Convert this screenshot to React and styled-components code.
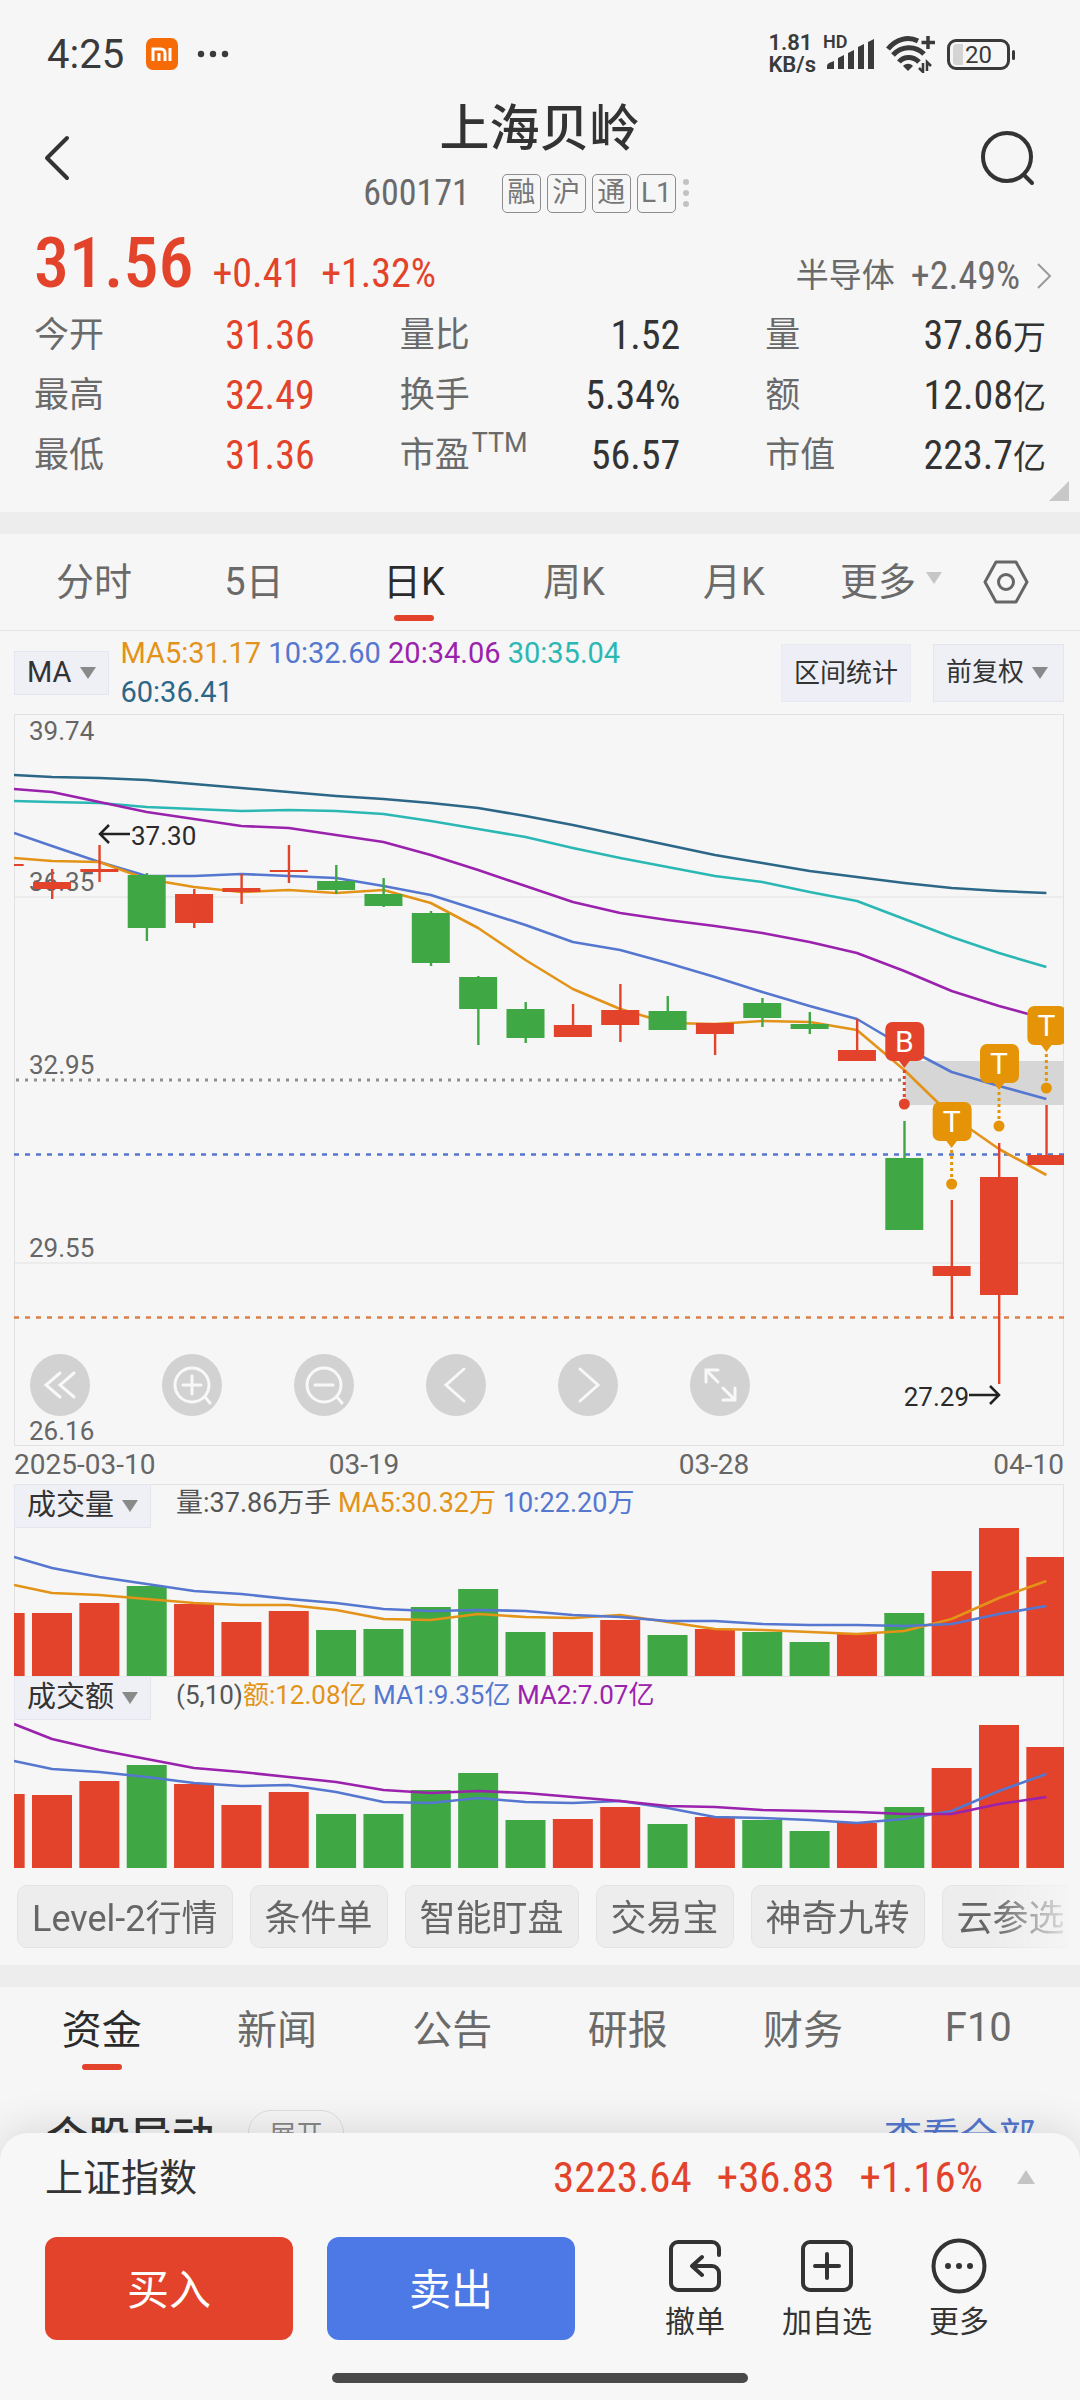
import React, { useState } from "react";
import styled, { createGlobalStyle } from "styled-components";

const RED = "#e2432a";
const GREEN = "#3fa845";
const ORANGE = "#e39317";
const BLUE = "#5577cf";
const PURPLE = "#9a22ad";
const CYAN = "#2bb8b5";
const NAVY = "#2c6788";

const STEP = 47.35;
const FIRST = 38;
const xOf = (i) => FIRST + STEP * i;

// top, bottom, high, low, rising
const candles = [
  [150, 152, 150, 152, 1],
  [168, 175, 155, 185, 1],
  [155, 158, 131, 168, 1],
  [161, 214, 159, 227, 0],
  [180, 209, 175, 214, 1],
  [174, 178, 160, 190, 1],
  [156, 158, 131, 169, 1],
  [167, 176, 151, 180, 0],
  [180, 192, 164, 193, 0],
  [199, 249, 197, 252, 0],
  [263, 295, 262, 331, 0],
  [295, 324, 288, 329, 0],
  [311, 323, 290, 323, 1],
  [296, 311, 270, 328, 1],
  [297, 316, 282, 316, 0],
  [309, 320, 309, 341, 1],
  [289, 304, 284, 313, 0],
  [310, 315, 298, 320, 0],
  [336, 347, 305, 347, 1],
  [444, 516, 407, 516, 0],
  [552, 562, 486, 605, 1],
  [463, 581, 429, 670, 1],
  [441, 451, 391, 451, 1],
];

// the first value of each line sits on the left edge of the plot
const priceLines = [
  { color: NAVY, points: [61, 63, 64, 66, 70, 74, 78, 82, 85, 89, 94, 102, 111, 121, 131, 141, 149, 157, 163, 169, 174, 177, 179] },
  { color: CYAN, points: [87, 88, 89, 93, 95, 97, 96, 97, 100, 107, 115, 123, 134, 144, 153, 162, 168, 178, 187, 205, 223, 239, 253] },
  { color: PURPLE, points: [75, 78, 88, 98, 105, 112, 114, 121, 128, 141, 156, 172, 188, 199, 206, 212, 219, 228, 239, 257, 277, 292, 305] },
  { color: BLUE, points: [119, 132, 148, 162, 162, 160, 162, 164, 172, 181, 196, 211, 228, 236, 249, 263, 278, 292, 305, 333, 358, 372, 385] },
  { color: ORANGE, points: [144, 147, 148, 165, 173, 178, 176, 179, 176, 189, 214, 246, 275, 295, 309, 310, 307, 308, 316, 356, 402, 435, 461] },
];

const volume = {
  bars: [129, 129, 119, 102, 120, 138, 127, 146, 145, 123, 105, 148, 148, 136, 151, 145, 148, 158, 150, 129, 87, 44, 73],
  lines: [
    { color: ORANGE, points: [101, 109, 111, 115, 119, 121, 121, 126, 135, 136, 130, 133, 134, 131, 138, 145, 146, 148, 150, 147, 135, 114, 97] },
    { color: BLUE, points: [73, 84, 93, 100, 107, 110, 115, 119, 125, 127, 126, 127, 131, 133, 137, 137, 140, 141, 141, 142, 140, 130, 122] },
  ],
};

const amount = {
  bars: [118, 119, 105, 89, 108, 129, 116, 138, 138, 114, 97, 144, 143, 131, 148, 141, 144, 155, 147, 131, 92, 49, 71],
  lines: [
    { color: BLUE, points: [85, 93, 96, 101, 107, 110, 109, 116, 126, 127, 122, 126, 127, 125, 132, 141, 142, 144, 147, 143, 135, 115, 98] },
    { color: PURPLE, points: [48, 63, 74, 83, 92, 96, 101, 106, 114, 117, 115, 117, 121, 125, 130, 131, 134, 135, 136, 138, 138, 128, 121] },
  ],
};

const marks = [
  { at: 18, y: 308, letter: "B", color: RED },
  { at: 19, y: 388, letter: "T", color: "#e59408" },
  { at: 20, y: 330, letter: "T", color: "#e59408" },
  { at: 21, y: 292, letter: "T", color: "#e59408" },
];

const stats = [
  { name: "今开", value: "31.36", rise: true },
  { name: "量比", value: "1.52" },
  { name: "量", value: "37.86", unit: "万" },
  { name: "最高", value: "32.49", rise: true },
  { name: "换手", value: "5.34%" },
  { name: "额", value: "12.08", unit: "亿" },
  { name: "最低", value: "31.36", rise: true },
  { name: "市盈", value: "56.57", sup: "TTM" },
  { name: "市值", value: "223.7", unit: "亿" },
];

const periods = ["分时", "5日", "日K", "周K", "月K"];
const tools = ["Level-2行情", "条件单", "智能盯盘", "交易宝", "神奇九转", "云参选"];
const sections = ["资金", "新闻", "公告", "研报", "财务", "F10"];

function MaLine({ color, points }) {
  const path = points.map((y, i) => `${i === 0 ? 0 : xOf(i - 1)},${y}`).join(" ");
  return <polyline points={path} fill="none" stroke={color} strokeWidth="2.6" strokeLinejoin="round" />;
}

function Triangle({ size = 16, color = "#8a8a8a", up }) {
  return (
    <svg width={size} height={size - 4} viewBox="0 0 16 12" preserveAspectRatio="none" aria-hidden="true">
      <path d={up ? "M8 0 16 12H0Z" : "M0 0H16L8 12Z"} fill={color} />
    </svg>
  );
}

function Picker({ label, options, ...rest }) {
  return (
    <PickerBox {...rest}>
      <select aria-label={label}>
        {options.map((o) => (
          <option key={o}>{o}</option>
        ))}
      </select>
      <Triangle />
    </PickerBox>
  );
}

function TradeMark({ at, y, letter, color }) {
  const x = xOf(at);
  return (
    <g>
      <line x1={x} x2={x} y1={y + 48} y2={y + 78} stroke={color} strokeWidth="3" strokeDasharray="3 3" />
      <circle cx={x} cy={y + 82} r="5.5" fill={color} />
      <rect x={x - 19} y={y} width="39" height="39" rx="7" fill={color} />
      <path d={`M${x - 6} ${y + 38}h12l-6 8z`} fill={color} />
      <ChartText x={x} y={y + 30} $fill="#fff" $size={30} textAnchor="middle">
        {letter}
      </ChartText>
    </g>
  );
}

function PriceChart() {
  return (
    <Drawing viewBox="0 0 1050 732" role="img" aria-label="日K">
      <path d="M0 .5H1050M0 183H1050M0 549H1050M0 731.5H1050M.5 0V732M1049.5 0V732" stroke="#e2e2e2" strokeWidth="1" fill="none" />
      <line x1="2" x2="1050" y1="366" y2="366" stroke="#8f8f8f" strokeWidth="3" strokeDasharray="3 6" />
      <line x1="0" x2="1050" y1="440.5" y2="440.5" stroke={BLUE} strokeWidth="2.4" strokeDasharray="5 6" />
      <line x1="0" x2="1050" y1="603.5" y2="603.5" stroke="#dd8048" strokeWidth="2.4" strokeDasharray="5 6" />
      <rect x="891" y="347" width="159" height="44" fill="#d6d6d6" />
      {["39.74", "36.35", "32.95", "29.55", "26.16"].map((v, i) => (
        <ChartText key={v} x="15" y={[26, 177, 360, 543, 726][i]}>
          {v}
        </ChartText>
      ))}
      {priceLines.map((line) => (
        <MaLine key={line.color} {...line} />
      ))}
      {candles.map(([top, bottom, high, low, up], i) => {
        const x = xOf(i - 1);
        const color = up ? RED : GREEN;
        return (
          <g key={i} fill={color}>
            <rect x={x - 19} y={top} width="38" height={bottom - top} />
            <rect x={x - 1} y={high} width="2.4" height={low - high} />
          </g>
        );
      })}
      {marks.map((m) => (
        <TradeMark key={m.at} {...m} />
      ))}
      <path d="M116 120H86M95 111 86 120 95 129" fill="none" stroke="#222" strokeWidth="2.5" />
      <ChartText x="117" y="131" $fill="#2b2b2b">
        37.30
      </ChartText>
      <ChartText x="955" y="692" textAnchor="end" $fill="#2b2b2b">
        27.29
      </ChartText>
      <path d="M955 681H985M976 672 985 681 976 690" fill="none" stroke="#222" strokeWidth="2.5" />
    </Drawing>
  );
}

function BarChart({ bars, lines, label }) {
  return (
    <Drawing viewBox="0 0 1050 192" role="img" aria-label={label}>
      <path d="M0 .5H1050M.5 0V192M1049.5 0V192" stroke="#e2e2e2" fill="none" />
      {bars.map((top, i) => (
        <rect key={i} x={xOf(i - 1) - 20} y={top} width="40" height={192 - top} fill={candles[i][4] ? RED : GREEN} />
      ))}
      {lines.map((line) => (
        <MaLine key={line.color} {...line} />
      ))}
    </Drawing>
  );
}

function StatusBar() {
  return (
    <Status>
      <Clock>4:25</Clock>
      <svg width="32" height="32" viewBox="0 0 32 32" aria-hidden="true">
        <rect width="32" height="32" rx="7" fill="#f76b07" />
        <path d="M7 23V11h8a4 4 0 0 1 4 4v8M13 15v8M24 10v13" fill="none" stroke="#fff" strokeWidth="3" />
      </svg>
      <svg width="34" height="8" viewBox="0 0 34 8" fill="#3a3a3a" aria-hidden="true">
        <circle cx="5" cy="4" r="3.2" />
        <circle cx="17" cy="4" r="3.2" />
        <circle cx="29" cy="4" r="3.2" />
      </svg>
      <StatusRight>
        <Speed>
          <span>1.81</span>
          <span>KB/s</span>
        </Speed>
        <Signal>
          <small>HD</small>
          <svg width="48" height="32" viewBox="0 0 48 32" fill="#3a3a3a" aria-hidden="true">
            <path d="M0 31v-3q0-2 2-3l5-2v8zM11 31V20l6-3v14zM21 31V15l6-3v19zM31 31V9l6-3v25zM41 31V4l6-3v30z" />
          </svg>
        </Signal>
        <svg width="50" height="38" viewBox="0 0 50 38" fill="none" stroke="#3a3a3a" strokeWidth="5" aria-hidden="true">
          <path d="M2 14C10 4 22 1 32 6" />
          <path d="M7 20c8-9 22-10 31-1" />
          <path d="M13 27c5-6 14-6 20 0" />
          <path d="M22 36l-5-5c3-3 7-3 10 0z" fill="#3a3a3a" stroke="none" />
          <path d="M42 1v13M35.500 7.500H49" strokeWidth="3.500" />
          <path d="M37 28v9l-4-4M41 36v-9l4 4" strokeWidth="2.500" />
        </svg>
        <Battery>
          <span>20</span>
        </Battery>
      </StatusRight>
    </Status>
  );
}

export default function App() {
  const [period, setPeriod] = useState("日K");
  const [section, setSection] = useState("资金");

  return (
    <Page>
      <GlobalStyle />
      <Content>
        <StatusBar />
        <Header>
          <IconButton aria-label="返回">
            <svg width="28" height="48" viewBox="0 0 28 48" fill="none" stroke="#333" strokeWidth="4" strokeLinecap="round" strokeLinejoin="round">
              <path d="M24 4 4 24 24 44" />
            </svg>
          </IconButton>
          <Heading>
            <h1>上海贝岭</h1>
            <CodeLine>
              <Code>600171</Code>
              {["融", "沪", "通", "L1"].map((t) => (
                <Badge key={t}>{t}</Badge>
              ))}
              <svg width="8" height="30" viewBox="0 0 8 30" fill="#c2c2c2" aria-hidden="true">
                <circle cx="4" cy="4" r="3" />
                <circle cx="4" cy="15" r="3" />
                <circle cx="4" cy="26" r="3" />
              </svg>
            </CodeLine>
          </Heading>
          <IconButton aria-label="搜索">
            <svg width="56" height="56" viewBox="0 0 56 56" fill="none" stroke="#333" strokeWidth="4" strokeLinecap="round">
              <circle cx="27" cy="27" r="24" />
              <path d="M44 45l8 8" />
            </svg>
          </IconButton>
        </Header>

        <Quote>
          <PriceLine>
            <Price>31.56</Price>
            <Change>+0.41</Change>
            <Change>+1.32%</Change>
            <Sector href="#sector">
              <span>半导体</span>
              <SectorChange>+2.49%</SectorChange>
              <svg width="16" height="26" viewBox="0 0 16 26" fill="none" stroke="#9a9a9a" strokeWidth="2">
                <path d="M2 1 14 13 2 25" />
              </svg>
            </Sector>
          </PriceLine>
          <StatGrid>
            {stats.map(({ name, value, unit, rise, sup }) => (
              <Stat key={name}>
                <dt>
                  {name}
                  {sup && <sup>{sup}</sup>}
                </dt>
                <StatValue $rise={rise}>
                  {value}
                  {unit && <small>{unit}</small>}
                </StatValue>
              </Stat>
            ))}
          </StatGrid>
          <Corner width="20" height="20" viewBox="0 0 20 20" aria-hidden="true">
            <path d="M20 0V20H0Z" fill="#c8c8c8" />
          </Corner>
        </Quote>
        <Divider />

        <PeriodTabs>
          {periods.map((p) => (
            <Tab key={p} $active={p === period} $size={38} onClick={() => setPeriod(p)}>
              {p}
            </Tab>
          ))}
          <MoreTab>
            更多
            <Triangle color="#c6c6c6" />
          </MoreTab>
          <SettingsButton aria-label="设置">
            <svg width="46" height="44" viewBox="0 0 46 44" fill="none" stroke="#666" strokeWidth="3" strokeLinejoin="round">
              <path d="M13 2H33L44 22 33 42H13L2 22Z" />
              <circle cx="23" cy="22" r="7.500" />
            </svg>
          </SettingsButton>
        </PeriodTabs>

        <Charts>
          <Indicator>
            <Picker label="指标" options={["MA", "BOLL", "EXPMA"]} />
            <Averages>
              <Tint $color={ORANGE}>MA5:31.17</Tint> <Tint $color={BLUE}>10:32.60</Tint>{" "}
              <Tint $color={PURPLE}>20:34.06</Tint> <Tint $color={CYAN}>30:35.04</Tint>{" "}
              <Tint $color={NAVY}>60:36.41</Tint>
            </Averages>
            <RangeButton>区间统计</RangeButton>
            <AdjustPicker label="复权" options={["前复权", "后复权", "不复权"]} />
          </Indicator>
          <Plot>
            <PriceChart />
            <Controls>
              <RoundButton aria-label="最早">
                <path d="M30 19 16 31 30 43M44 19 30 31 44 43" />
              </RoundButton>
              <RoundButton aria-label="放大">
                <circle cx="30" cy="31" r="17" />
                <path d="M21 31H39M30 22V40M43 43l5 6" />
              </RoundButton>
              <RoundButton aria-label="缩小">
                <circle cx="30" cy="31" r="17" />
                <path d="M21 31H39M43 43l5 6" />
              </RoundButton>
              <RoundButton aria-label="向左">
                <path d="M38 15 20 31 38 47" />
              </RoundButton>
              <RoundButton aria-label="向右">
                <path d="M22 15 40 31 22 47" />
              </RoundButton>
              <RoundButton aria-label="全屏">
                <path d="M16 28V16H28M16 16 28 28M45 34V46H33M45 46 33 34" />
              </RoundButton>
            </Controls>
          </Plot>
          <Dates>
            <time>2025-03-10</time>
            <time>03-19</time>
            <time>03-28</time>
            <time>04-10</time>
          </Dates>
          <Plot>
            <BarChart {...volume} label="成交量" />
            <BarHead>
              <Picker label="副图一" options={["成交量", "MACD"]} />
              <Legend $size={27}>
                量:37.86万手 <Tint $color={ORANGE}>MA5:30.32万</Tint> <Tint $color={BLUE}>10:22.20万</Tint>
              </Legend>
            </BarHead>
          </Plot>
          <Plot>
            <BarChart {...amount} label="成交额" />
            <BarHead>
              <Picker label="副图二" options={["成交额", "KDJ"]} />
              <Legend $size={26}>
                (5,10)<Tint $color={ORANGE}>额:12.08亿</Tint> <Tint $color={BLUE}>MA1:9.35亿</Tint>{" "}
                <Tint $color={PURPLE}>MA2:7.07亿</Tint>
              </Legend>
            </BarHead>
          </Plot>
        </Charts>

        <Tools>
          {tools.map((t) => (
            <Tool key={t}>{t}</Tool>
          ))}
        </Tools>
        <Divider />

        <SectionTabs>
          {sections.map((s) => (
            <Tab key={s} $active={s === section} $size={40} onClick={() => setSection(s)}>
              {s}
            </Tab>
          ))}
        </SectionTabs>
        <NewsHead>
          <h2>个股异动</h2>
          <button>展开</button>
          <a href="#all">查看全部</a>
        </NewsHead>
      </Content>

      <Sheet>
        <IndexRow>
          <IndexName>上证指数</IndexName>
          <IndexValues>
            <span>3223.64</span>
            <span>+36.83</span>
            <span>+1.16%</span>
          </IndexValues>
          <Triangle size={18} color="#c4c4c4" up />
        </IndexRow>
        <Actions>
          <TradeButton $color={RED}>买入</TradeButton>
          <TradeButton $color="#4c79e6">卖出</TradeButton>
          <Shortcuts>
            <Shortcut>
              <svg width="56" height="56" viewBox="0 0 56 56">
                <path d="M52 17V11a7 7 0 0 0-7-7H11a7 7 0 0 0-7 7V45a7 7 0 0 0 7 7H45a7 7 0 0 0 7-7V35a7 7 0 0 0-7-7H26M35 19 25 28 35 37" />
              </svg>
              撤单
            </Shortcut>
            <Shortcut>
              <svg width="56" height="56" viewBox="0 0 56 56">
                <rect x="4" y="4" width="48" height="48" rx="7" />
                <path d="M16 28H40M28 16V40" />
              </svg>
              加自选
            </Shortcut>
            <Shortcut>
              <svg width="56" height="56" viewBox="0 0 56 56">
                <circle cx="28" cy="28" r="25.500" />
                <path d="M17 28h.01M28 28h.01M39 28h.01" strokeWidth="6" />
              </svg>
              更多
            </Shortcut>
          </Shortcuts>
        </Actions>
        <HomeBar />
      </Sheet>
    </Page>
  );
}

const GlobalStyle = createGlobalStyle`
  * {
    box-sizing: border-box;
  }
  body {
    margin: 0;
    background: #f6f6f6;
    color: #333;
    font-family: Roboto, "Noto Sans CJK SC", sans-serif;
  }
  button, select {
    border: none;
    padding: 0;
    background: none;
    color: inherit;
    font: inherit;
    white-space: nowrap;
  }
  h1, h2, p, dl, dd {
    margin: 0;
    font-weight: 400;
  }
  a {
    text-decoration: none;
  }
  svg {
    flex: none;
  }
`;

const NARROW = `"Roboto Condensed", Roboto, "Noto Sans CJK SC", sans-serif`;

const Page = styled.main`
  display: flex;
  flex-direction: column;
  height: 100vh;
`;
const Content = styled.div`
  flex: 1;
  min-height: 0;
  overflow: hidden;
`;

const Status = styled.div`
  display: flex;
  align-items: center;
  height: 88px;
  padding: 20px 70px 0 47px;
  color: #3a3a3a;
`;
const Clock = styled.span`
  margin-right: 22px;
  font-size: 40px;
  & + svg {
    margin-right: 18px;
  }
`;
const StatusRight = styled.div`
  display: flex;
  align-items: center;
  gap: 11px;
  margin-left: auto;
`;
const Speed = styled.div`
  display: grid;
  font-size: 22px;
  font-weight: 600;
  line-height: 22px;
`;
const Signal = styled.div`
  position: relative;
  display: flex;
  small {
    position: absolute;
    top: -4px;
    left: -4px;
    font-size: 18px;
    font-weight: 600;
    line-height: 16px;
  }
`;
const Battery = styled.div`
  position: relative;
  width: 63px;
  height: 31px;
  border: 3px solid #3a3a3a;
  border-radius: 9px;
  background: linear-gradient(90deg, #d4d4d4 20%, transparent 20%) content-box;
  padding: 2px 3px;
  font-size: 24px;
  line-height: 22px;
  text-align: center;
  &::after {
    content: "";
    position: absolute;
    top: 8px;
    right: -8px;
    width: 3px;
    height: 10px;
    border-radius: 2px;
    background: #3a3a3a;
  }
`;

const Header = styled.header`
  display: grid;
  grid-template-columns: 1fr auto 1fr;
  align-items: center;
  height: 140px;
  padding: 0 44px 0 43px;
  button:last-child {
    justify-self: end;
  }
`;
const IconButton = styled.button`
  display: flex;
`;
const Heading = styled.div`
  display: grid;
  justify-items: center;
  gap: 16px;
  padding-bottom: 2px;
  h1 {
    font-size: 50px;
    font-weight: 500;
    line-height: 56px;
  }
`;
const CodeLine = styled.div`
  display: flex;
  align-items: center;
  gap: 6px;
  padding-right: 26px;
`;
const Code = styled.span`
  margin-right: 26px;
  color: #6a6a6a;
  font-family: ${NARROW};
  font-size: 36px;
  line-height: 40px;
`;
const Badge = styled.span`
  width: 39px;
  height: 39px;
  border: 1px solid #8c8c8c;
  border-radius: 5px;
  color: #777;
  font-size: 28px;
  line-height: 36px;
  text-align: center;
`;

const Quote = styled.section`
  position: relative;
  padding: 0 34px;
  height: 284px;
`;
const PriceLine = styled.div`
  display: flex;
  align-items: baseline;
  gap: 19px;
  height: 78px;
  color: ${RED};
  line-height: 70px;
`;
const Price = styled.strong`
  font-family: ${NARROW};
  font-size: 70px;
  font-weight: 500;
`;
const Change = styled.span`
  font-family: ${NARROW};
  font-size: 40px;
`;
const Sector = styled.a`
  display: flex;
  gap: 16px;
  align-items: center;
  margin: 0 -6px 0 auto;
  color: #6a6a6a;
  font-size: 33px;
`;
const SectorChange = styled.span`
  font-family: ${NARROW};
  font-size: 38px;
`;
const StatGrid = styled.dl`
  display: grid;
  grid-template-columns: repeat(3, 1fr);
  column-gap: 85px;
`;
const Stat = styled.div`
  display: flex;
  justify-content: space-between;
  height: 60px;
  line-height: 60px;
  font-size: 35px;
  dt {
    color: #6a6a6a;
  }
  sup {
    margin-left: 2px;
    font-size: 27px;
    line-height: 0;
    vertical-align: 15px;
  }
`;
const StatValue = styled.dd`
  color: ${(p) => (p.$rise ? RED : "#333")};
  font-family: ${NARROW};
  font-size: 40px;
  small {
    font-size: 33px;
  }
`;
const Corner = styled.svg`
  position: absolute;
  right: 11px;
  bottom: 11px;
`;
const Divider = styled.div`
  height: 22px;
  background: #ededed;
`;

const PeriodTabs = styled.nav`
  display: grid;
  grid-template-columns: repeat(5, 160fr) 154fr 112fr;
  align-items: end;
  height: 97px;
  padding-left: 14px;
  border-bottom: 1px solid #e3e3e3;
`;
const Tab = styled.button`
  position: relative;
  height: 92px;
  padding-bottom: 12px;
  color: ${(p) => (p.$active ? "#2b2b2b" : "#6a6a6a")};
  font-size: ${(p) => p.$size}px;
  &::after {
    content: "";
    display: ${(p) => (p.$active ? "block" : "none")};
    position: absolute;
    bottom: 9px;
    left: calc(50% - 20px);
    width: 40px;
    height: 6px;
    border-radius: 3px;
    background: ${RED};
  }
`;
const MoreTab = styled.button`
  display: flex;
  align-items: center;
  justify-content: center;
  gap: 10px;
  height: 92px;
  padding-bottom: 12px;
  color: #6a6a6a;
  font-size: 38px;
`;
const SettingsButton = styled(IconButton)`
  align-self: center;
  padding-left: 15px;
`;

const Charts = styled.section`
  padding: 0 16px 0 14px;
`;
const Indicator = styled.div`
  display: flex;
  align-items: center;
  height: 83px;
  gap: 12px;
`;
const PickerBox = styled.label`
  display: inline-flex;
  align-items: center;
  gap: 8px;
  height: 44px;
  padding: 0 12px;
  border: 1px solid #e4e5ee;
  background: #eff0f6;
  color: #333;
  font-size: 29px;
  select {
    appearance: none;
    field-sizing: content;
    padding-bottom: 2px;
  }
`;
const Averages = styled.p`
  flex: 1;
  padding-right: 90px;
  font-size: 29px;
  line-height: 39px;
`;
const Tint = styled.span`
  color: ${(p) => p.$color};
  white-space: nowrap;
`;
const RangeButton = styled.button`
  width: 130px;
  height: 58px;
  margin-right: 10px;
  padding-bottom: 4px;
  border: 1px solid #e9e9f4;
  background: #eeeef6;
  font-size: 26px;
`;
const AdjustPicker = styled(Picker)`
  width: 131px;
  height: 58px;
  font-size: 26px;
`;

const Plot = styled.div`
  position: relative;
`;
const Drawing = styled.svg`
  display: block;
  width: 100%;
  height: auto;
`;
const ChartText = styled.text`
  font-size: ${(p) => p.$size || 26}px;
  fill: ${(p) => p.$fill || "#666"};
`;
const Controls = styled.div`
  position: absolute;
  left: 16px;
  bottom: 30px;
  display: flex;
  gap: 72px;
`;
const RoundButton = ({ children, ...rest }) => (
  <Round {...rest}>
    <svg width="60" height="62" viewBox="0 0 60 62" fill="none" stroke="#f8f8f8" strokeWidth="3" strokeLinecap="round">
      {children}
    </svg>
  </Round>
);
const Round = styled.button`
  width: 60px;
  height: 62px;
  border-radius: 50%;
  background: #d2d2d2;
`;
const Dates = styled.div`
  display: grid;
  grid-template-columns: 1fr 2fr 2fr 1fr;
  height: 38px;
  color: #666;
  font-size: 28px;
  line-height: 38px;
  text-align: center;
  white-space: nowrap;
  time:first-child {
    text-align: left;
  }
  time:last-child {
    text-align: right;
  }
`;
const BarHead = styled.div`
  position: absolute;
  top: 0;
  left: 0;
  display: flex;
  gap: 25px;
`;
const Legend = styled.p`
  color: #555;
  font-size: ${(p) => p.$size}px;
  line-height: 38px;
`;

const Tools = styled.div`
  display: flex;
  gap: 17px;
  margin: 17px 12px 17px 0;
  padding-left: 17px;
  overflow: hidden;
  mask-image: linear-gradient(90deg, #000 93%, transparent 101%);
`;
const Tool = styled.button`
  flex: none;
  height: 63px;
  padding: 0 14px 4px;
  border: 1px solid #e3e3e3;
  border-radius: 10px;
  background: #ededed;
  color: #666;
  font-size: 36px;
`;

const SectionTabs = styled.nav`
  display: grid;
  grid-template-columns: repeat(6, 1fr);
  padding: 0 14px;
`;
const NewsHead = styled.div`
  display: flex;
  align-items: center;
  height: 60px;
  margin-top: 24px;
  padding: 0 44px 0 46px;
  h2 {
    margin-right: 34px;
    font-size: 42px;
    font-weight: 500;
  }
  button {
    height: 46px;
    padding: 0 20px;
    border: 1px solid #ddd;
    border-radius: 23px;
    color: #888;
    font-size: 27px;
  }
  a {
    margin-left: auto;
    color: ${BLUE};
    font-size: 38px;
  }
`;

const Sheet = styled.footer`
  position: relative;
  padding: 0 45px 17px;
  border-radius: 28px 28px 0 0;
  background: #f7f7f7;
  box-shadow: 0 -4px 40px rgba(0, 0, 0, 0.12);
`;
const IndexRow = styled.div`
  display: flex;
  align-items: center;
  height: 88px;
`;
const IndexName = styled.span`
  padding-bottom: 5px;
  font-size: 38px;
`;
const IndexValues = styled.span`
  display: flex;
  gap: 25px;
  margin: 0 34px 0 auto;
  color: ${RED};
  font-family: ${NARROW};
  font-size: 43px;
`;
const Actions = styled.div`
  display: flex;
  gap: 34px;
  padding: 16px 0 33px;
`;
const TradeButton = styled.button`
  flex: 247;
  height: 103px;
  padding-bottom: 4px;
  border-radius: 12px;
  background: ${(p) => p.$color};
  color: #fff;
  font-size: 42px;
`;
const Shortcuts = styled.div`
  display: grid;
  grid-template-columns: repeat(3, 132px);
  margin: 0 -24px 0 20px;
  padding-right: 34px;
`;
const Shortcut = styled.button`
  display: grid;
  justify-items: center;
  align-content: center;
  gap: 10px;
  font-size: 30px;
  line-height: 36px;
  svg {
    fill: none;
    stroke: #333;
    stroke-width: 4;
    stroke-linecap: round;
    stroke-linejoin: round;
  }
`;
const HomeBar = styled.div`
  width: 42%;
  height: 10px;
  margin: 0 auto;
  border-radius: 5px;
  background: #4a4a4a;
`;
